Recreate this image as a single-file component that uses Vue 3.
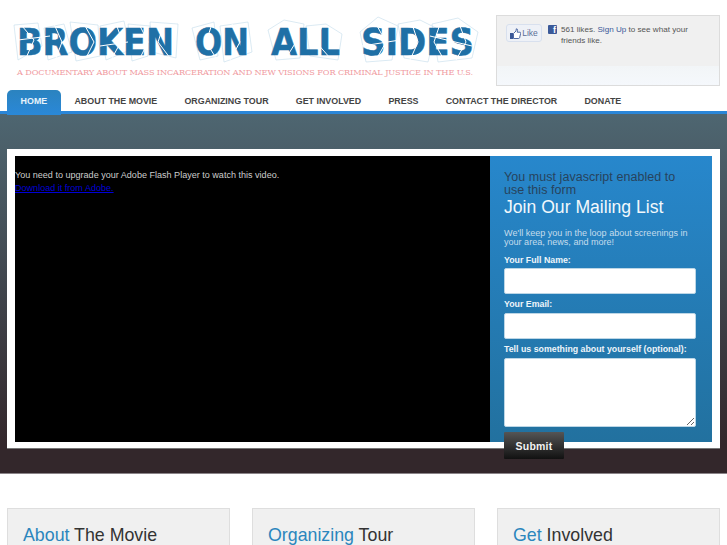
<script setup>
const navItems = ['HOME', 'ABOUT THE MOVIE', 'ORGANIZING TOUR', 'GET INVOLVED', 'PRESS', 'CONTACT THE DIRECTOR', 'DONATE']
const cards = [['About', 'The Movie'], ['Organizing', 'Tour'], ['Get', 'Involved']]
const words = [
  { text: 'BROKEN', x: 17, w: 157 },
  { text: 'ON', x: 195, w: 54 },
  { text: 'ALL', x: 271, w: 69 },
  { text: 'SIDES', x: 361, w: 113 }
]
const shards = [
  'M14 25 L38 23 L42 46 L18 60 Z', 'M44 28 L64 24 L72 52 L48 60 Z', 'M70 22 L98 25 L100 56 L76 61 Z',
  'M100 26 L124 21 L130 50 L106 60 Z', 'M128 24 L150 26 L148 56 L132 61 Z', 'M150 22 L178 24 L176 58 L152 52 Z',
  'M192 28 L214 22 L218 56 L200 60 Z', 'M220 26 L248 22 L252 52 L224 62 Z',
  'M268 30 L284 20 L304 24 L300 58 L276 60 Z', 'M306 26 L326 24 L342 34 L338 60 L310 56 Z',
  'M360 32 L378 17 L398 26 L392 60 L366 62 Z', 'M398 24 L420 20 L436 28 L428 62 L404 58 Z', 'M432 24 L458 18 L478 32 L472 58 L438 62 Z'
]
const cracks = [
  'M22 26 L34 40 L26 58', 'M54 24 L62 42 L56 58', 'M84 24 L94 42 L86 58', 'M116 24 L122 40 L112 58',
  'M140 26 L148 42 L140 58', 'M164 24 L158 42 L170 58', 'M212 24 L206 42 L216 58', 'M232 24 L240 42 L230 60',
  'M288 24 L296 42 L286 58', 'M322 26 L316 42 L330 58', 'M376 24 L386 42 L376 60', 'M412 24 L418 42 L410 60',
  'M440 24 L434 42 L444 60', 'M460 26 L466 42 L456 60', 'M18 40 L50 36', 'M100 46 L128 42', 'M362 46 L400 40', 'M430 36 L472 46'
]
</script>

<template>
  <div class="page">
    <header class="header">
      <svg class="logo" width="490" height="90" viewBox="0 0 490 90" role="img">
        <g fill="none" stroke="#c2dceb" stroke-width=".6">
          <path v-for="s in shards" :key="s" :d="s" />
        </g>
        <text v-for="w in words" :key="w.text" :x="w.x" y="55" :textLength="w.w" lengthAdjust="spacingAndGlyphs" class="logo-title">{{ w.text }}</text>
        <g fill="none" stroke="#fff" stroke-width="1">
          <path v-for="c in cracks" :key="c" :d="c" />
        </g>
        <text x="17" y="75" textLength="456" lengthAdjust="spacing" class="logo-tag">A DOCUMENTARY ABOUT MASS INCARCERATION AND NEW VISIONS FOR CRIMINAL JUSTICE IN THE U.S.</text>
      </svg>
      <aside class="fb">
        <div class="fb-top">
          <span class="fb-like">
            <svg width="11" height="11" viewBox="0 0 11 11">
              <rect x="0" y="5" width="3" height="6" fill="#3b5998" />
              <path d="M3.5 5.5 L6 3 L6.3 .8 Q7.6 .7 7.6 2.4 L7.2 4.2 L10.2 4.2 Q11 4.6 10.6 5.6 L9.6 9.8 Q9.3 10.5 8.6 10.5 L3.5 10.5 Z" fill="#fff" stroke="#3b5998" stroke-width=".9" />
            </svg>
            Like
          </span>
          <span class="fb-icon">f</span>
          <p class="fb-text">561 likes. <a>Sign Up</a> to see what your friends like.</p>
        </div>
        <div class="fb-bottom"></div>
      </aside>
    </header>

    <nav class="nav">
      <a v-for="(item, i) in navItems" :key="item" :class="['nav-item', { active: i === 0 }]">{{ item }}</a>
    </nav>

    <section class="band">
      <div class="panel">
        <div class="video">
          <p>You need to upgrade your Adobe Flash Player to watch this video.</p>
          <a>Download it from Adobe.</a>
        </div>
        <form class="signup" @submit.prevent>
          <p class="warn">You must javascript enabled to use this form</p>
          <h2>Join Our Mailing List</h2>
          <p class="lead">We'll keep you in the loop about screenings in your area, news, and more!</p>
          <label class="first" for="f-name">Your Full Name:</label>
          <input class="first" id="f-name" type="text" />
          <label for="f-email">Your Email:</label>
          <input id="f-email" type="text" />
          <label for="f-about">Tell us something about yourself (optional):</label>
          <textarea id="f-about"></textarea>
          <button type="submit">Submit</button>
        </form>
      </div>
    </section>

    <section class="cards">
      <article v-for="c in cards" :key="c[0]" class="card">
        <h3><span>{{ c[0] }}</span> {{ c[1] }}</h3>
      </article>
    </section>
  </div>
</template>

<style>
html, body { margin: 0; background: #fff; overflow: hidden; }
</style>

<style scoped>
.page { width: 727px; height: 545px; overflow: hidden; font-family: "Liberation Sans", Arial, sans-serif; }
.header { height: 90px; display: flex; justify-content: space-between; padding-right: 7px; }
.logo { display: block; flex: none; }
.logo-title { font-family: "DejaVu Sans", sans-serif; font-weight: 700; font-size: 37px; fill: #1f70a6; stroke: #1f70a6; stroke-width: .5px; }
.logo-tag { font-family: "DejaVu Serif", serif; font-size: 8.2px; fill: #f09aa0; }

.fb { width: 224px; height: 71px; margin-top: 15px; box-sizing: border-box; border: 1px solid #dcdcdc; background: #f0f0f0; display: flex; flex-direction: column; }
.fb-top { flex: 1; display: flex; align-items: flex-start; padding: 8px 9px 0; }
.fb-bottom { height: 19px; background: linear-gradient(#f2f5f7, #f5f8fc); }
.fb-like { width: 36px; height: 18px; box-sizing: border-box; flex: none; display: flex; align-items: center; justify-content: center; gap: 1px; border: 1px solid #d8e0ee; border-radius: 3px; background: #eef1f7; color: #5a6f97; font-size: 8.5px; }
.fb-icon { width: 9px; height: 9px; flex: none; margin: 1px 0 0 6px; background: #3b5998; color: #fff; font-size: 9px; font-weight: 700; line-height: 11px; text-align: right; border-radius: 1px; overflow: hidden; padding-right: 1px; box-sizing: border-box; }
.fb-text { margin: 0 0 0 4px; font-size: 8.1px; line-height: 11px; color: #555; width: 140px; }
.fb-text a { color: #3b5998; }

.nav { height: 21px; padding: 0 7px; display: flex; border-bottom: 3px solid #2a86d8; box-sizing: content-box; position: relative; }
.nav-item { padding: 0 13.6px; font-size: 8.9px; font-weight: 700; line-height: 23px; color: #444; white-space: nowrap; }
.nav-item.active { height: 25px; border-radius: 5px 5px 0 0; background: linear-gradient(#2b83bf, #2a88d8); color: #e8f3fb; position: relative; z-index: 1; }

.band { height: 360px; box-sizing: border-box; padding: 35px 7px 0; background: linear-gradient(#4e6671, #33272b 92%); border-bottom: 1px solid #8a8488; }
.panel { height: 300px; box-sizing: border-box; padding: 7px 8px 6px; background: #fff; display: flex; border-bottom: 1px solid #777; }
.video { width: 475px; flex: none; background: #000; color: #ccc; font-size: 9.05px; line-height: 13px; padding-top: 13px; box-sizing: border-box; }
.video p { margin: 0; }
.video a { color: #0000d8; text-decoration: underline; display: block; }
.signup { flex: 1; height: 286px; padding: 15px 14px 0; box-sizing: border-box; background: linear-gradient(#2787cc, #22719f); display: flex; flex-direction: column; align-items: flex-start; }
.signup > * { flex: none; }
.warn { margin: 0; max-width: 186px; font-size: 12.5px; line-height: 13px; color: #27435c; letter-spacing: .05px; }
.signup h2 { margin: 0; font-size: 17.6px; line-height: 20px; font-weight: 400; color: #f2f8fc; }
.lead { margin: 12px 0 0; font-size: 9.05px; line-height: 9px; color: #c4dcec; }
.signup label { font-size: 8.8px; font-weight: 700; line-height: 11px; color: #eef5fa; margin-top: 5px; }
.signup label.first { margin-top: 8px; }
.signup input, .signup textarea { display: block; width: 192px; box-sizing: border-box; border: 1px solid #bcd6e6; border-radius: 2px; background: #fff; margin: 3px 0 0; padding: 0; }
.signup input.first { margin-top: 2px; }
.signup input { height: 26px; }
.signup textarea { height: 69px; }
.signup button { width: 60px; height: 27px; margin-top: 5px; border: 0; border-radius: 1px; background: linear-gradient(#555, #111); color: #f2f2f2; font: 700 10.5px "Liberation Sans", Arial, sans-serif; letter-spacing: .2px; }

.cards { display: flex; gap: 22px; padding: 34px 7px 0; }
.card { flex: 1; height: 80px; box-sizing: border-box; background: #f0f0f0; border: 1px solid #dedede; padding: 15px 15px; }
.card h3 { margin: 0; font-size: 17.8px; line-height: 22px; font-weight: 400; color: #333; }
.card h3 span { color: #2b86bd; }
</style>
